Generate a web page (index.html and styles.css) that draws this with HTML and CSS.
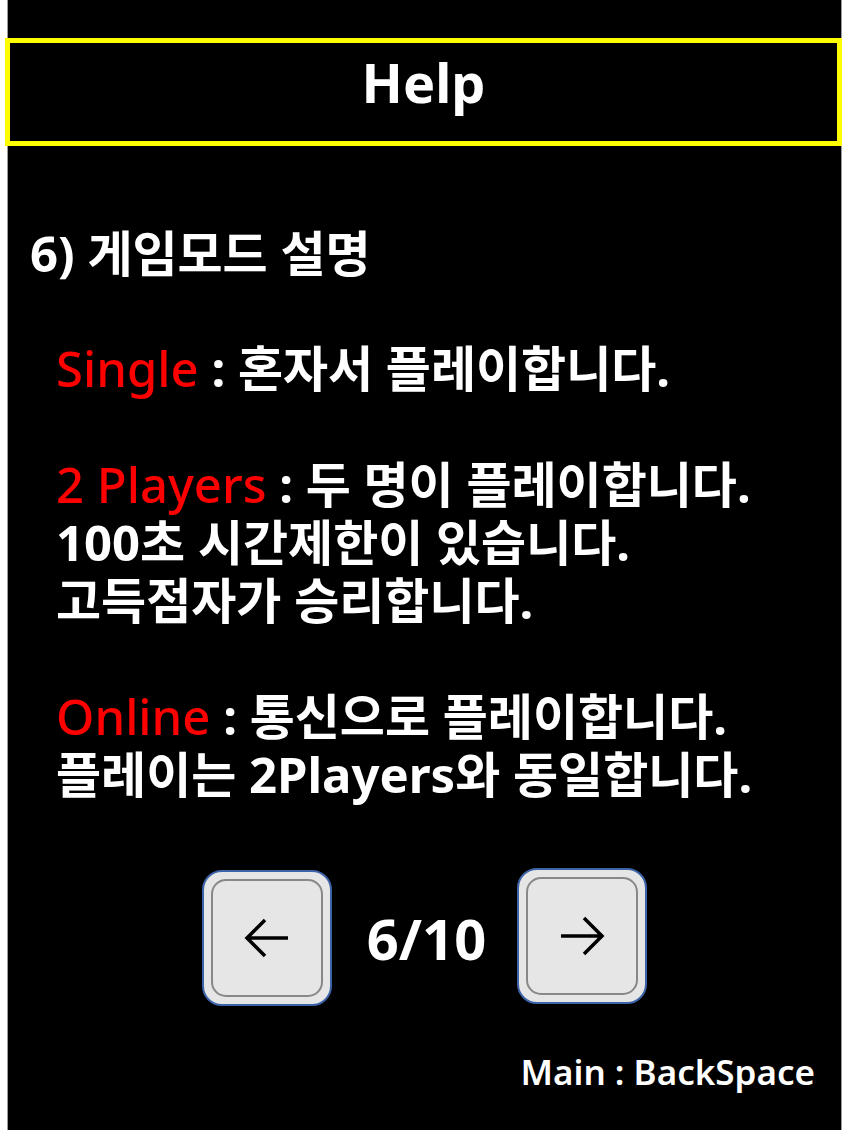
FILE: index.html
```html
<!DOCTYPE html>
<html lang="ko">
<head>
    <meta charset="UTF-8">
    <meta name="viewport" content="width=device-width, initial-scale=1.0">
    <title>Help</title>
    <link rel="stylesheet" href="styles.css">
</head>
<body>
    <div class="screen">
        <div class="title-bar">Help</div>

        <h2 class="section">6) 게임모드 설명</h2>

        <div class="help-text">
            <p><span class="mode">Single</span> : 혼자서 플레이합니다.</p>
            <p><span class="mode">2 Players</span> : 두 명이 플레이합니다.<br>100초 시간제한이 있습니다.<br>고득점자가 승리합니다.</p>
            <p><span class="mode">Online</span> : 통신으로 플레이합니다.<br>플레이는 2Players와 동일합니다.</p>
        </div>

        <div class="pager">
            <button class="key key-prev">
                <span class="key-inner">
                    <svg width="46" height="40" viewBox="0 0 46 40"><path d="M44 20H3M21 2L3 20l18 18" fill="none" stroke="#000" stroke-width="3.5"/></svg>
                </span>
            </button>
            <span class="page-num">6/10</span>
            <button class="key key-next">
                <span class="key-inner">
                    <svg width="46" height="40" viewBox="0 0 46 40"><path d="M2 20h41M25 2l18 18-18 18" fill="none" stroke="#000" stroke-width="3.5"/></svg>
                </span>
            </button>
        </div>

        <div class="footer">Main : BackSpace</div>
    </div>
</body>
</html>
```

FILE: styles.css
```css
* {
    margin: 0;
    padding: 0;
    box-sizing: border-box;
}

body {
    background: #fff;
    padding-left: 7px;
    font-family: "Noto Sans", "Noto Sans CJK KR", sans-serif;
    font-weight: 700;
    color: #fff;
    overflow: hidden;
}

.screen {
    width: 835px;
    height: 1130px;
    background: #000;
    border-left: 1px solid #9a9a9a;
    border-right: 1px solid #9a9a9a;
    padding-top: 38px;
}

.title-bar {
    margin: 0 -1px 0 -3px;
    height: 108px;
    border: 5px solid #ffff00;
    text-align: center;
    font-size: 54px;
    line-height: 78px;
}

.section {
    margin: 78px 0 0 22px;
    font-size: 49px;
    line-height: 58px;
    font-weight: 700;
}

.help-text {
    margin: 57px 0 0 48px;
    font-size: 49px;
    line-height: 58px;
}

.help-text p + p {
    margin-top: 58px;
}

.mode {
    color: #ff0000;
    font-weight: 500;
}

.pager {
    display: flex;
    align-items: center;
    justify-content: center;
    margin-top: 67px;
}

.key {
    width: 130px;
    height: 136px;
    background: #e6e6e6;
    border: 2px solid #3d63a8;
    border-radius: 20px;
    padding: 7px;
    display: flex;
}

.key-next {
    margin-top: -5px;
}

.key-inner {
    flex: 1;
    border: 2px solid #888;
    border-radius: 15px;
    display: flex;
    align-items: center;
    justify-content: center;
}

.page-num {
    font-size: 56px;
    margin: 0 31px 0 35px;
}

.footer {
    margin-top: 42px;
    text-align: right;
    padding-right: 26px;
    font-size: 35px;
    font-weight: 600;
}
```
